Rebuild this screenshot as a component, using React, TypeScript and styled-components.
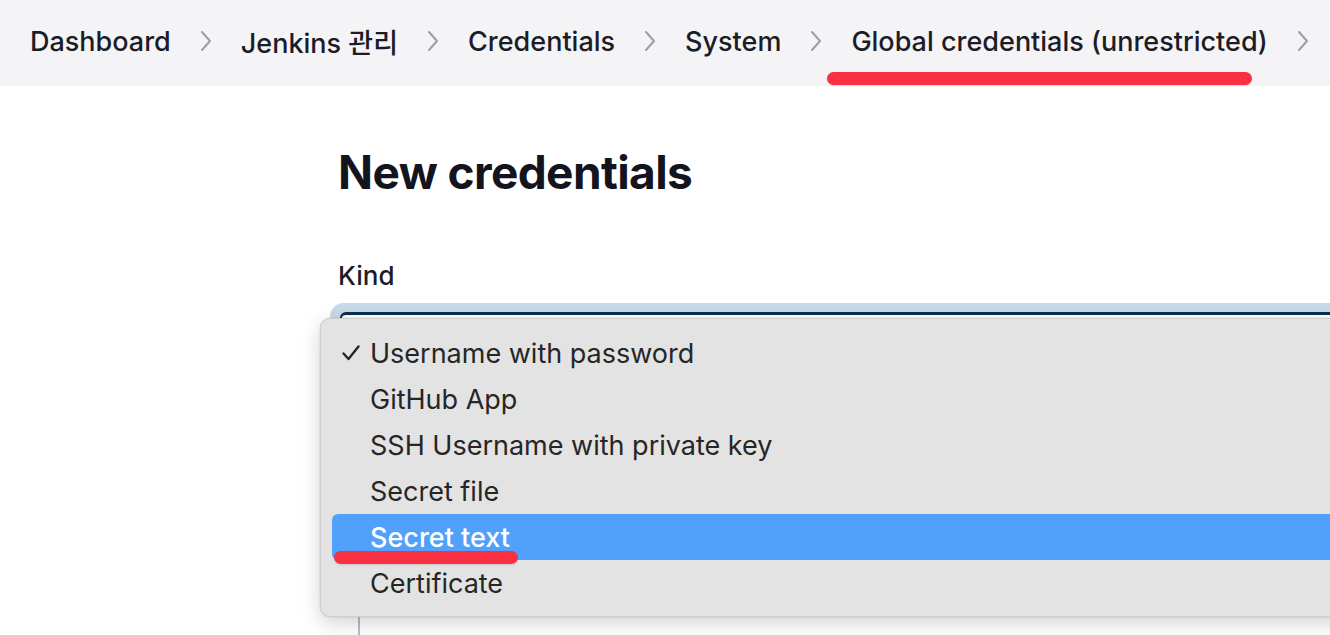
import React from "react";
import styled, { createGlobalStyle } from "styled-components";

const GlobalStyle = createGlobalStyle`
  html, body { margin: 0; padding: 0; background: #ffffff; }
  body { font-family: Inter, "Noto Sans CJK KR", "Noto Sans", sans-serif; overflow: hidden; }
  * { box-sizing: border-box; }
`;

const Page = styled.div`
  width: 1330px;
  height: 635px;
  overflow: hidden;
  position: relative;
  background: #fff;
`;

const Crumbs = styled.nav`
  height: 86px;
  background: #f4f4f6;
  display: flex;
  align-items: center;
  padding-left: 30px;
  gap: 28px;
  padding-bottom: 4px;
`;

const Crumb = styled.span`
  position: relative;
  font-size: 27px;
  font-weight: 500;
  color: #1c1c26;
  letter-spacing: 0;
  white-space: nowrap;
`;

const Mark = styled.span<{ $left: number; $width: number; $top: number }>`
  position: absolute;
  left: ${(p) => p.$left}px;
  top: ${(p) => p.$top}px;
  width: ${(p) => p.$width}px;
  height: 13px;
  border-radius: 7px;
  background: #f92f42;
  box-shadow: 0 1px 2px rgba(0, 0, 0, 0.12);
  z-index: 5;
`;

const Chevron = () => (
  <svg width="14" height="24" viewBox="0 0 14 24" fill="none">
    <path d="M3 3 L11 12 L3 21" stroke="#9d9daa" strokeWidth="2" strokeLinecap="round" strokeLinejoin="round" />
  </svg>
);

const Main = styled.main`
  padding-left: 338px;
  position: relative;
`;

const Title = styled.h1`
  margin: 0;
  padding-top: 56px;
  font-size: 46px;
  font-weight: 700;
  color: #14141e;
  letter-spacing: -0.6px;
  line-height: 60px;
`;

const Label = styled.div`
  margin-top: 58px;
  font-size: 26px;
  font-weight: 500;
  color: #1c1c26;
  line-height: 32px;
`;

const Field = styled.div`
  margin-top: 11px;
  margin-left: -8px;
  height: 60px;
  border-radius: 14px 0 0 0;
  background: #c7dae9;
  padding: 9px 0 0 10px;
`;

const FieldInner = styled.div`
  height: 100%;
  border-top: 3px solid #0c2f4f;
  border-left: 2px solid #0c2f4f;
  border-radius: 6px 0 0 0;
  background: #fff;
`;

const Below = styled.div`
  margin-left: 20px;
  height: 300px;
  border-left: 2px solid #b8bcc4;
`;

const Menu = styled.ul`
  position: absolute;
  left: 320px;
  top: 318px;
  width: 1040px;
  margin: 0;
  padding: 11px 11px 10px 11px;
  list-style: none;
  background: #e3e3e3;
  border: 1px solid #cfcfcf;
  border-radius: 10px;
  box-shadow: 0 6px 20px rgba(0, 0, 0, 0.18), 0 0 0 0.5px rgba(0, 0, 0, 0.08);
  z-index: 3;
`;

const Item = styled.li<{ $active?: boolean }>`
  position: relative;
  height: 46px;
  display: flex;
  align-items: center;
  padding-left: 38px;
  font-size: 27px;
  font-weight: ${(p) => (p.$active ? 500 : 400)};
  color: ${(p) => (p.$active ? "#ffffff" : "#262626")};
  background: ${(p) => (p.$active ? "#51a0fb" : "transparent")};
  border-radius: 6px 0 0 6px;
  white-space: nowrap;
`;

const Check = styled.span`
  position: absolute;
  left: 9px;
  top: 13px;
  display: flex;
`;

const items = [
  "Username with password",
  "GitHub App",
  "SSH Username with private key",
  "Secret file",
  "Secret text",
  "Certificate",
];

export default function App() {
  return (
    <Page>
      <GlobalStyle />
      <Crumbs>
        <Crumb>Dashboard</Crumb>
        <Chevron />
        <Crumb>Jenkins 관리</Crumb>
        <Chevron />
        <Crumb>Credentials</Crumb>
        <Chevron />
        <Crumb>System</Crumb>
        <Chevron />
        <Crumb>
          Global credentials (unrestricted)
          <Mark $left={-24} $width={425} $top={47} />
        </Crumb>
        <Chevron />
      </Crumbs>
      <Main>
        <Title>New credentials</Title>
        <Label>Kind</Label>
        <Field>
          <FieldInner />
        </Field>
        <Below />
      </Main>
      <Menu>
        {items.map((label, i) => (
          <Item key={label} $active={label === "Secret text"}>
            {i === 0 && (
              <Check>
                <svg width="20" height="20" viewBox="0 0 20 20" fill="none">
                  <path d="M2.5 10.5 L7.5 16 L17.5 3.5" stroke="#262626" strokeWidth="2.4" strokeLinecap="round" strokeLinejoin="round" />
                </svg>
              </Check>
            )}
            {label}
            {label === "Secret text" && <Mark $left={2} $width={184} $top={37} />}
          </Item>
        ))}
      </Menu>
    </Page>
  );
}
